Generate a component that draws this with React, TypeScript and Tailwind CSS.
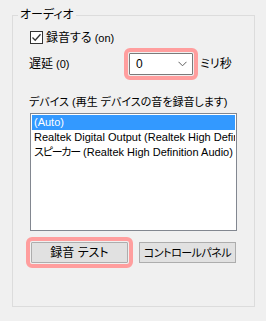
import React from 'react';

const ChevronDown: React.FC = () => (
    <svg width="9" height="6" viewBox="0 0 9 6" className="block">
        <path d="M0.5 0.8 L4.5 4.8 L8.5 0.8" fill="none" stroke="#606060" strokeWidth="1" />
    </svg>
);

const CheckMark: React.FC = () => (
    <svg width="11" height="11" viewBox="0 0 11 11" className="block">
        <path d="M1.5 5.5 L4.2 8.2 L9.5 2.2" fill="none" stroke="#333" strokeWidth="1.3" />
    </svg>
);

// kana part is drawn a little tighter, like the Windows UI font
const devices = [
    { kana: '', name: '(Auto)' },
    { kana: '', name: 'Realtek Digital Output (Realtek High Definition Audio)' },
    { kana: 'スピーカー', name: ' (Realtek High Definition Audio)' },
];

const App: React.FC = () => {
    const selected = 0;

    return (
        <div className="w-[266px] h-[321px] bg-[#f0f0f0] pt-[15px] pl-[12px] font-['Liberation_Sans','Noto_Sans_CJK_JP',sans-serif] text-[11px] text-black [font-feature-settings:'palt'] overflow-hidden">
            {/* group box */}
            <div className="relative w-[243px] h-[292px] border border-[#dcdcdc] pl-[16px]">
                <span className="absolute left-[5px] top-[-9px] px-[2px] bg-[#f0f0f0] leading-[16px] text-[12px]">オーディオ</span>

                {/* record checkbox */}
                <div className="mt-[15px] ml-[1px] flex items-center h-[13px]">
                    <div className="w-[13px] h-[13px] border border-[#333] bg-white flex items-center justify-center">
                        <CheckMark />
                    </div>
                    <span className="ml-[3px] leading-[16px]"><span className="text-[12px]">録音する</span> (on)</span>
                </div>

                {/* delay */}
                <div className="mt-[9px] flex items-center h-[22px]">
                    <span className="w-[100px] leading-[16px]"><span className="text-[12px]">遅延</span> (0)</span>
                    <div className="w-[64px] h-[22px] border border-[#7a7a7a] bg-white flex items-center justify-between pl-[6px] pr-[5px] rounded-[1px] outline-4 outline-offset-1 outline-[#ff9e9e]">
                        <span className="leading-[16px] text-[12px]">0</span>
                        <ChevronDown />
                    </div>
                    <span className="ml-[7px] leading-[16px] text-[12px]">ミリ秒</span>
                </div>

                {/* device list */}
                <div className="mt-[19px] leading-[16px] whitespace-nowrap">デバイス (再生 デバイスの音を録音します)</div>
                <div className="mt-[3px] ml-[1px] w-[207px] h-[118px] border border-[#828790] bg-white p-[1px] overflow-hidden">
                    {devices.map((d, i) => (
                        <div
                            key={d.name}
                            className={`h-[15px] leading-[15px] pl-[2px] whitespace-nowrap overflow-hidden ${i === selected ? 'bg-[#3399ff] text-white' : ''}`}
                        >
                            {d.kana && <span className="tracking-[-1.2px]">{d.kana}</span>}
                            {d.name}
                        </div>
                    ))}
                </div>

                {/* buttons */}
                <div className="mt-[11px] ml-[2px] flex gap-[11px]">
                    <button className="w-[97px] h-[21px] bg-[#e1e1e1] border border-[#adadad] rounded-[1px] leading-[16px] text-[12px] whitespace-nowrap outline-4 outline-offset-1 outline-[#ff9e9e]">
                        録音 テスト
                    </button>
                    <button className="w-[97px] h-[21px] bg-[#e1e1e1] border border-[#adadad] leading-[16px] whitespace-nowrap tracking-[-0.5px]">
                        コントロールパネル
                    </button>
                </div>
            </div>
        </div>
    );
};

export default App;
